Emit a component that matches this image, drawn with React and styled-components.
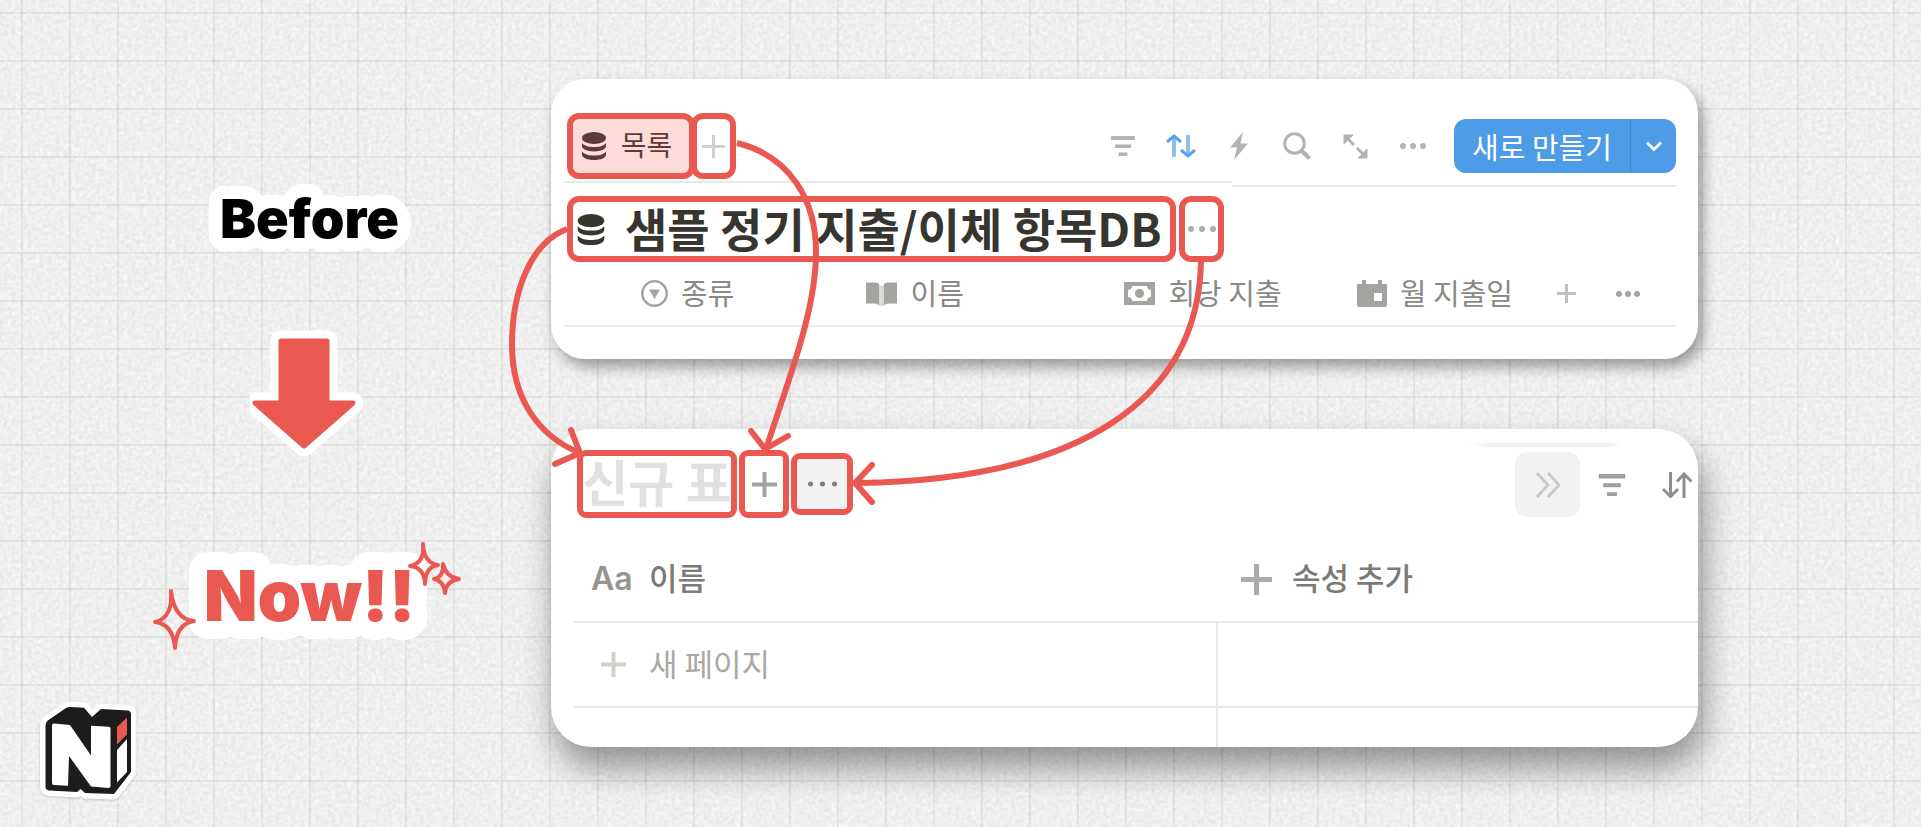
import styled, { createGlobalStyle } from 'styled-components';

const colors = {
  paper: '#ededed',
  red: '#ea5951',
  redTint: '#fbdcda',
  blue: '#4e9be8',
  ink: '#37352f',
  icon: '#b4b3b0',
  label: '#8a8984',
  line: '#e8e8e6',
  chip: '#f2f2f2',
};

// Rings of hard shadows, give lettering a rounded sticker edge
const stickerEdge = (radius) =>
  Array.from({ length: 48 }, (_, i) => {
    const angle = (i / 48) * Math.PI * 2;
    const x = Math.round(Math.cos(angle) * radius);
    const y = Math.round(Math.sin(angle) * radius);
    return `${x}px ${y}px 0 #fff, ${Math.round(x / 2)}px ${Math.round(y / 2)}px 0 #fff`;
  }).join(', ');

const GlobalStyle = createGlobalStyle`
  *, *::before, *::after { box-sizing: border-box; }

  body {
    margin: 0;
    background: ${colors.paper};
    font-family: "Noto Sans CJK KR", "Noto Sans", sans-serif;
  }

  button {
    padding: 0;
    border: none;
    background: none;
    font: inherit;
    color: inherit;
    cursor: pointer;
  }

  svg { display: block; }
`;

const Page = styled.main`
  position: relative;
  display: grid;
  grid-template-columns: 551px minmax(0, 1fr);
  min-height: 100vh;
  padding: 79px 223px 27px 0;
  overflow: hidden;
  isolation: isolate;
`;

const Grain = styled.svg`
  position: absolute;
  inset: 0;
  width: 100%;
  height: 100%;
  z-index: -2;
`;

const GridLines = styled.div`
  position: absolute;
  inset: 0;
  z-index: -1;
  background-image:
    linear-gradient(rgba(90, 90, 90, 0.09) 2px, transparent 2px),
    linear-gradient(90deg, rgba(90, 90, 90, 0.09) 2px, transparent 2px);
  background-size: 48px 48px;
  background-position: 21px 12px;
`;

const Side = styled.aside`
  display: flex;
  flex-direction: column;
  align-items: center;
  padding-left: 68px;
`;

const Lettering = styled.h2`
  margin: 0;
  font-family: Inter, "Liberation Sans", sans-serif;
  font-weight: 900;
  font-size: ${(props) => props.$size}px;
  line-height: ${(props) => props.$line}px;
  color: ${(props) => props.$color};
  text-shadow: ${(props) => stickerEdge(props.$edge)};
`;

const BeforeBlock = styled.div`
  padding: 108px 0 79px;
`;

const NowBlock = styled.div`
  position: relative;
  margin-top: 98px;
`;

const Sparkles = styled.svg`
  position: absolute;
  left: -52px;
  top: -14px;
  overflow: visible;
`;

const Logo = styled.svg`
  position: absolute;
  left: 30px;
  bottom: 17px;
  filter: drop-shadow(0 1px 1px rgba(0, 0, 0, 0.2));
`;

const Cards = styled.div`
  position: relative;
  display: flex;
  flex-direction: column;
  gap: 70px;
`;

const Card = styled.section`
  background: #fff;
  overflow: hidden;
`;

const OldCard = styled(Card)`
  border-radius: 34px;
  padding: 34px 22px 32px 13px;
  box-shadow: 5px 8px 14px rgba(0, 0, 0, 0.36);
`;

const NewCard = styled(Card)`
  border-radius: 40px;
  padding: 21px 0 0 23px;
  box-shadow: 5px 20px 34px rgba(0, 0, 0, 0.4);
`;

const Bar = styled.div`
  display: flex;
  align-items: flex-start;
  justify-content: space-between;
`;

const Marks = styled.div`
  display: flex;
  align-items: center;
  padding-left: 3px;
  gap: ${(props) => props.$gap || 0}px;
`;

const Mark = styled.button`
  display: flex;
  align-items: center;
  justify-content: center;
  flex: none;
  width: ${(props) => (props.$width ? `${props.$width}px` : 'auto')};
  height: ${(props) => props.$height || 66}px;
  border: 6px solid ${colors.red};
  border-radius: ${(props) => props.$radius || 12}px;
  background: ${(props) => props.$fill || 'transparent'};
`;

const TabMark = styled(Mark)`
  gap: 15px;
  margin-right: -4px;
  padding-right: 8px;
  font-size: 28px;
  line-height: 40px;
  color: #5f3a36;
`;

const TitleMark = styled(Mark)`
  justify-content: flex-start;
  gap: 20px;
  padding-left: 4px;
  color: ${colors.ink};
`;

const Title = styled.h1`
  margin: 0;
  padding-bottom: 5px;
  font-size: 46px;
  font-weight: 700;
  line-height: 50px;
  white-space: nowrap;
`;

const EmptyTitle = styled.span`
  padding-bottom: 8px;
  font-size: 50px;
  font-weight: 700;
  line-height: 48px;
  color: #e1e1df;
  white-space: nowrap;
`;

const Tools = styled.div`
  display: flex;
  align-items: center;
  padding-top: ${(props) => props.$top}px;
`;

const Tool = styled.button`
  display: grid;
  place-items: center;
  width: ${(props) => props.$width || 58}px;
  height: 54px;
  color: ${(props) => props.$color || colors.icon};
`;

const EndTool = styled(Tool)`
  justify-items: end;
  padding-right: 6px;
`;

const Chip = styled(Tool)`
  width: 65px;
  height: 65px;
  border-radius: 12px;
  background: ${colors.chip};
`;

const SplitButton = styled.div`
  display: flex;
  height: 54px;
  margin-left: 12px;
  border-radius: 12px;
  background: ${colors.blue};
  color: #fff;
  overflow: hidden;
`;

const CreateButton = styled.button`
  width: 176px;
  font-size: 29px;
  line-height: 54px;
`;

const MoreButton = styled.button`
  display: grid;
  place-items: center;
  width: 46px;
  border-left: 1px solid #4688cc;
`;

const Rules = styled.div`
  display: flex;
  align-items: flex-start;
  height: 17px;
`;

const Rule = styled.div`
  flex: ${(props) => (props.$width ? `0 0 ${props.$width}px` : 1)};
  margin-top: ${(props) => props.$top}px;
  height: 2px;
  background: ${colors.line};
`;

const Table = styled.table`
  width: 100%;
  table-layout: fixed;
  border-collapse: collapse;
  text-align: left;
`;

const Col = styled.col`
  width: ${(props) => props.$share};
`;

const PropHead = styled.th`
  height: 64px;
  padding: 0 0 0 ${(props) => props.$indent || 0}px;
  border-bottom: 2px solid #ececec;
  font-size: 29px;
  font-weight: 400;
  color: ${colors.label};
  white-space: nowrap;
`;

const HeadCell = styled.th`
  height: 104px;
  padding: 19px 0 0 ${(props) => props.$indent}px;
  border-bottom: 2px solid #e9e9e7;
  font-size: 31px;
  font-weight: 500;
  color: #7b7a76;
`;

const BodyCell = styled.td`
  height: ${(props) => props.$height}px;
  padding: 0 0 0 27px;
  border-bottom: ${(props) => (props.$last ? 'none' : `2px solid ${colors.line}`)};
  font-size: 31px;
  color: #a9a8a4;

  & + & {
    border-left: 2px solid ${colors.line};
  }
`;

const Label = styled.div`
  display: flex;
  align-items: center;
  gap: ${(props) => props.$gap || 13}px;
  line-height: 40px;
`;

// Hangul sits low in its line box, so the text is lifted next to icons
const Caption = styled.span`
  padding-bottom: 4px;
`;

const Aa = styled.span`
  width: 42px;
  font-family: Inter, sans-serif;
  font-weight: 600;
  font-size: 32px;
  color: #959490;
`;

const Ghost = styled.div`
  position: absolute;
  right: 75px;
  top: 364px;
  width: 152px;
  height: 4px;
  background: linear-gradient(90deg, transparent, #f1f1f1 12%, #f1f1f1 88%, transparent);
`;

const Arrows = styled.svg`
  position: absolute;
  left: -51px;
  top: -19px;
  pointer-events: none;
`;

const DatabaseIcon = ({ width, height }) => (
  <svg width={width} height={height} viewBox="0 0 24 28" fill="currentColor">
    <ellipse cx="12" cy="6" rx="12" ry="6" />
    <path d="M0 11c3 3.400 7 4 12 4s9-.600 12-4v3c0 3.200-5 5.400-12 5.400S0 17.200 0 14z" />
    <path d="M0 19.500c3 3.400 7 4 12 4s9-.600 12-4v3c0 3.300-5 5.500-12 5.500S0 25.800 0 22.500z" />
  </svg>
);

const PlusIcon = ({ size, weight = 3, color = '#c2c1be' }) => (
  <svg width={size} height={size} viewBox={`0 0 ${size} ${size}`} stroke={color} strokeWidth={weight}>
    <path d={`M${size / 2} 0V${size}M0 ${size / 2}H${size}`} />
  </svg>
);

const DotsIcon = ({ width = 26, r = 3, color = colors.icon }) => (
  <svg width={width} height="8" viewBox={`0 0 ${width} 8`} fill={color}>
    <circle cx={r} cy="4" r={r} />
    <circle cx={width / 2} cy="4" r={r} />
    <circle cx={width - r} cy="4" r={r} />
  </svg>
);

const FilterIcon = ({ width = 24, height = 20 }) => (
  <svg width={width} height={height} viewBox="0 0 24 20" fill="currentColor">
    <path d="M0 0h24v4H0zM4 8.500h16v3.500H4zM7.500 16.500h9V20h-9z" />
  </svg>
);

const SortIcon = ({ flip }) => (
  <svg width="30" height="26" viewBox="0 0 30 26" fill="none" stroke="currentColor" strokeWidth="3">
    {flip ? (
      <path d="M8.500 0v23M1 17l7.500 7.500L16 17M22 26V3M15 9.500L22 2l7.500 7.500" />
    ) : (
      <g>
        <path d="M8 24V3M22 2v21" strokeWidth="4" opacity="0.7" />
        <path d="M1 9L8 3l7 6M15 17l7 6 7-6" />
      </g>
    )}
  </svg>
);

const BoltIcon = () => (
  <svg width="18" height="28" viewBox="0 0 18 28" fill="currentColor">
    <path d="M13 0L0 15.500h7L4 28l14-16.500h-7.500z" />
  </svg>
);

const SearchIcon = () => (
  <svg width="28" height="28" viewBox="0 0 28 28" fill="none" stroke="currentColor" strokeWidth="3">
    <circle cx="11.500" cy="11.500" r="9.800" />
    <path d="M18.500 18.500l8 8" strokeWidth="4" />
  </svg>
);

const ExpandIcon = () => (
  <svg width="25" height="25" viewBox="0 0 25 25" fill="currentColor" stroke="currentColor">
    <path d="M1 1h9L7.500 3.500 4 7 1 10zM24 24h-9l2.500-2.500L21 18l3-3z" strokeWidth="1" />
    <path d="M3 3l8 8M22 22l-8-8" strokeWidth="3" />
  </svg>
);

const ChevronIcon = () => (
  <svg width="16" height="11" viewBox="0 0 16 11" fill="none" stroke="currentColor" strokeWidth="3">
    <path d="M1 1.500l7 7 7-7" />
  </svg>
);

const DoubleChevronIcon = () => (
  <svg width="24" height="26" viewBox="0 0 24 26" fill="none" stroke="#cbc9c5" strokeWidth="3">
    <path d="M1 1l11 12L1 25M12 1l11 12-11 12" />
  </svg>
);

const SelectIcon = () => (
  <svg width="27" height="27" viewBox="0 0 27 27">
    <circle cx="13.500" cy="13.500" r="12.200" fill="none" stroke="#a5a4a0" strokeWidth="2.500" />
    <path d="M8 9.500h11l-5.500 9.500z" fill="#a5a4a0" />
  </svg>
);

const BookIcon = () => (
  <svg width="31" height="26" viewBox="0 0 31 26" fill="#a5a4a0">
    <path d="M0 1.500h9c2.500 0 4.500 1 4.500 3V25c-1-1.500-3-2.500-5-2.500H0zM31 1.500h-9c-2.500 0-4.500 1-4.500 3V25c1-1.500 3-2.500 5-2.500H31z" />
    <path d="M13.500 5h4v20h-4z" fill="#dcdcda" />
  </svg>
);

const MoneyIcon = () => (
  <svg width="31" height="23" viewBox="0 0 31 23" fill="#a5a4a0">
    <path
      fillRule="evenodd"
      d="M0 0h31v23H0zM8 4c0 2.500-1.500 4-4 4v7c2.500 0 4 1.500 4 4h15c0-2.500 1.500-4 4-4V8c-2.500 0-4-1.500-4-4z"
    />
    <circle cx="15.500" cy="11.500" r="4.500" />
  </svg>
);

const CalendarIcon = () => (
  <svg width="30" height="27" viewBox="0 0 30 27" fill="#a5a4a0">
    <path fillRule="evenodd" d="M0 4h5V0h4v4h12V0h4v4h5v21q0 2-2 2H2q-2 0-2-2zM17 13v8h8v-8z" />
  </svg>
);

const DownArrow = () => (
  <svg width="120" height="126" viewBox="6 0 120 126" strokeLinejoin="round">
    <path d="M37 11h46v62h26L60 116 11 73h26z" fill="#fff" stroke="#fff" strokeWidth="21" />
    <path d="M37 11h46v62h26L60 116 11 73h26z" fill={colors.red} stroke={colors.red} strokeWidth="5" />
  </svg>
);

const Spark = ({ d }) => (
  <path d={d} fill="none" stroke={colors.red} strokeWidth="4" strokeLinejoin="round" />
);

const BrandLogo = () => {
  const outline =
    'M15.500 36q0-4 3-6L36 18q2-1 4-1l14 .700 8 9.300 9-8 27 1.500q3 .500 3 4V82L84 104l-29-1-4.500-4-3.500 3-28-1.500q-3.500-.500-3.500-4z';
  return (
    <Logo width="120" height="120" viewBox="0 0 120 120" role="img" aria-label="Ni">
      <path d={outline} fill="#fff" stroke="#fff" strokeWidth="11" strokeLinejoin="round" />
      <path d={outline} fill="#1d1c1a" />
      <path
        d="M22 35.500q0-2 2-2l16 1.500 21 30.500V35.700l17.500 1q2 0 2 2V96q0 2-2 2L61 96.500 39 66l-1 29.700L24 95q-2 0-2-2z"
        fill="#fff"
      />
      <path d="M87 37l10-9.500v17L87 54.500z" fill={colors.red} />
      <path d="M87 60l10-11v33L87 92.500z" fill="#fff" />
    </Logo>
  );
};

export default function App() {
  return (
    <>
      <GlobalStyle />
      <Page>
        <Grain aria-hidden="true">
          <filter id="grain" colorInterpolationFilters="sRGB">
            <feTurbulence type="fractalNoise" baseFrequency="0.25" numOctaves="3" seed="4" />
            <feColorMatrix values="0.11 0 0 0 0.884  0.11 0 0 0 0.884  0.11 0 0 0 0.884  0 0 0 0 1" />
          </filter>
          <rect width="100%" height="100%" filter="url(#grain)" />
        </Grain>
        <GridLines />

        <Side>
          <BeforeBlock>
            <Lettering $size={54} $line={64} $edge={13} $color="#000">Before</Lettering>
          </BeforeBlock>
          <DownArrow />
          <NowBlock>
            <Lettering $size={70} $line={84} $edge={18} $color={colors.red}>Now!!</Lettering>
            <Sparkles width="310" height="112" viewBox="154 538 310 112" aria-hidden="true">
              <Spark d="M173 589q3 28 23 30-18 3-19 27-2-24-20-26 18-4 16-31z" />
              <Spark d="M425 542q1 19 15 21-13 2-13 19-1-17-15-18 15-3 13-22z" />
              <Spark d="M445 562q3 13 16 15-13 2-14 14-1-12-11-14 10-2 9-15z" />
            </Sparkles>
          </NowBlock>
        </Side>

        <Cards>
          <OldCard aria-label="Before">
            <Bar>
              <Marks>
                <TabMark $width={128} $fill={colors.redTint}>
                  <DatabaseIcon width={24} height={28} />
                  <Caption>목록</Caption>
                </TabMark>
                <Mark $width={45} aria-label="보기 추가">
                  <PlusIcon size={23} color="#d0cfcd" />
                </Mark>
              </Marks>
              <Tools $top={6}>
                <Tool aria-label="필터"><FilterIcon /></Tool>
                <Tool aria-label="정렬" $color="#5aa3ec"><SortIcon /></Tool>
                <Tool aria-label="자동화"><BoltIcon /></Tool>
                <Tool aria-label="검색"><SearchIcon /></Tool>
                <Tool aria-label="확장"><ExpandIcon /></Tool>
                <Tool aria-label="더 보기"><DotsIcon /></Tool>
                <SplitButton>
                  <CreateButton>새로 만들기</CreateButton>
                  <MoreButton aria-label="옵션"><ChevronIcon /></MoreButton>
                </SplitButton>
              </Tools>
            </Bar>
            <Rules>
              <Rule $width={668} $top={2} />
              <Rule $top={6} />
            </Rules>
            <Marks $gap={3}>
              <TitleMark as="div" $width={609}>
                <DatabaseIcon width={28} height={31} />
                <Title>샘플 정기 지출/이체 항목DB</Title>
              </TitleMark>
              <Mark $width={45} aria-label="더 보기">
                <DotsIcon width={28} color="#aeada9" />
              </Mark>
            </Marks>
            <Table>
              <colgroup>
                <Col $share="27.2%" />
                <Col $share="23.2%" />
                <Col $share="20.9%" />
                <Col $share="18%" />
                <Col />
              </colgroup>
              <thead>
                <tr>
                  <PropHead $indent={77}><Label><SelectIcon /><Caption>종류</Caption></Label></PropHead>
                  <PropHead><Label><BookIcon /><Caption>이름</Caption></Label></PropHead>
                  <PropHead><Label><MoneyIcon /><Caption>회당 지출</Caption></Label></PropHead>
                  <PropHead><Label><CalendarIcon /><Caption>월 지출일</Caption></Label></PropHead>
                  <PropHead>
                    <Label $gap={40}>
                      <button aria-label="속성 추가"><PlusIcon size={19} /></button>
                      <button aria-label="더 보기"><DotsIcon width={24} color="#a5a4a0" /></button>
                    </Label>
                  </PropHead>
                </tr>
              </thead>
            </Table>
          </OldCard>

          <NewCard aria-label="Now">
            <Bar>
              <Marks $gap={2}>
                <Mark as="div" $width={160} $height={68} $radius={9}>
                  <EmptyTitle>신규 표</EmptyTitle>
                </Mark>
                <Mark $width={50} $height={68} $radius={9} aria-label="보기 추가">
                  <PlusIcon size={25} weight={4} color="#a3a2a0" />
                </Mark>
                <Mark $width={62} $height={62} $radius={9} $fill={colors.chip} aria-label="더 보기">
                  <DotsIcon width={29} r={2.5} color="#7c7b78" />
                </Mark>
              </Marks>
              <Tools $top={2}>
                <Chip aria-label="펼치기"><DoubleChevronIcon /></Chip>
                <Tool aria-label="필터" $width={64} $color="#a09f9b"><FilterIcon width={30} height={22} /></Tool>
                <EndTool aria-label="정렬" $width={54} $color="#8f8e8a"><SortIcon flip /></EndTool>
              </Tools>
            </Bar>
            <Table>
              <colgroup>
                <Col $share="57.2%" />
                <Col />
              </colgroup>
              <thead>
                <tr>
                  <HeadCell $indent={17}>
                    <Label $gap={16}><Aa>Aa</Aa><Caption>이름</Caption></Label>
                  </HeadCell>
                  <HeadCell $indent={24}>
                    <Label $gap={20}>
                      <PlusIcon size={31} weight={5} color="#acaba8" />
                      <Caption>속성 추가</Caption>
                    </Label>
                  </HeadCell>
                </tr>
              </thead>
              <tbody>
                <tr>
                  <BodyCell $height={85}>
                    <Label $gap={23}>
                      <PlusIcon size={25} weight={4} color="#d3d1cc" />
                      <Caption>새 페이지</Caption>
                    </Label>
                  </BodyCell>
                  <BodyCell />
                </tr>
                <tr>
                  <BodyCell $height={40} $last />
                  <BodyCell $last />
                </tr>
              </tbody>
            </Table>
          </NewCard>

          <Ghost />
          <Arrows
            width="760"
            height="480"
            viewBox="500 60 760 480"
            fill="none"
            stroke={colors.red}
            strokeWidth="6"
            aria-hidden="true"
          >
            <path d="M567 229C530 243 512 292 512 345C512 398 538 436 580 453" />
            <path d="M737 143C790 156 816 200 816 252C816 310 790 375 766 449" />
            <path d="M1201 262C1198 400 1080 480 858 483" />
            <g strokeLinecap="round" strokeLinejoin="round">
              <path d="M571 430l9 23-25 11" />
              <path d="M751 431l14 18 23-13" />
              <path d="M872 465l-17 18 17 19" />
            </g>
          </Arrows>
        </Cards>

        <BrandLogo />
      </Page>
    </>
  );
}
